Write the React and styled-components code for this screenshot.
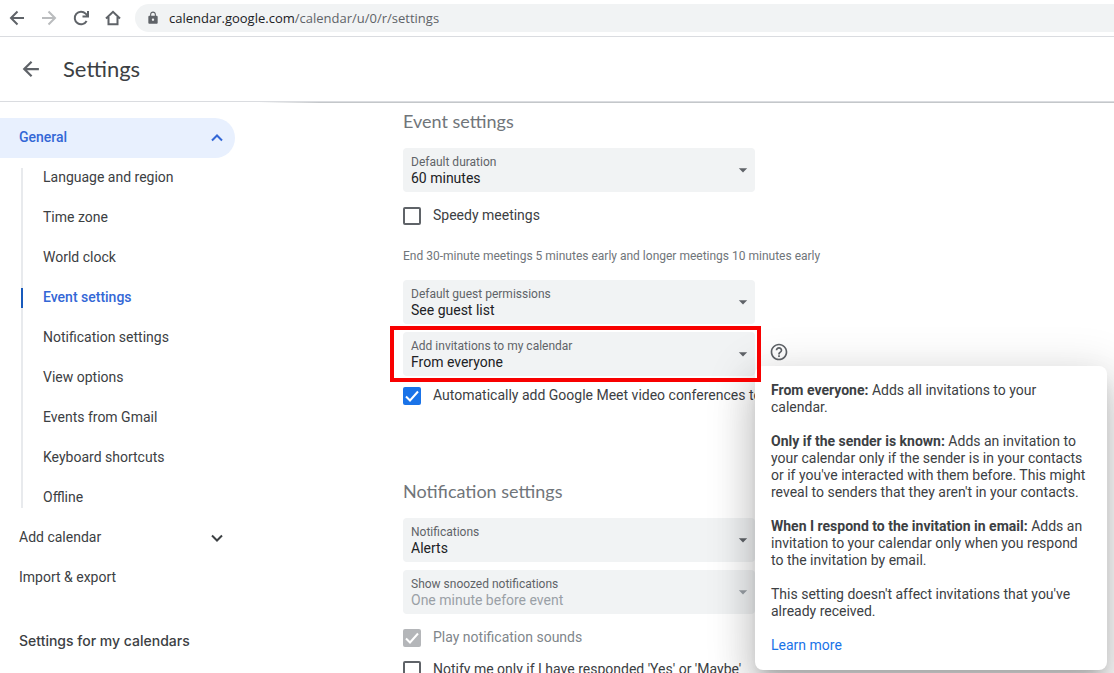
import React, { useState } from 'react';
import styled, { createGlobalStyle, css } from 'styled-components';
import { MdLock, MdArrowDropDown, MdHelpOutline } from 'react-icons/md';

const GlobalStyle = createGlobalStyle`
	* {
		box-sizing: border-box;
	}

	body {
		margin: 0;
		background: #fff;
		color: #3c4043;
		font-family: Roboto, 'Liberation Sans', sans-serif;
		font-size: 14px;
		line-height: 20px;
	}

	h1, h2, h3, p, ul {
		margin: 0;
		padding: 0;
		font-weight: 400;
	}

	button {
		border: 0;
		padding: 0;
		background: none;
		color: inherit;
		font: inherit;
		cursor: pointer;
	}
`;

const Page = styled.div`
	display: flex;
	flex-direction: column;
	height: 100vh;
	overflow: hidden;
`;

const BrowserBar = styled.div`
	display: flex;
	align-items: center;
	gap: 12px;
	flex: none;
	height: 37px;
	padding-left: 7px;
	border-bottom: 1px solid #dadce0;
`;

const IconButton = styled.button`
	display: flex;
	align-items: center;
	justify-content: center;
	flex: none;
	width: ${(props) => props.$size || 20}px;
	height: ${(props) => props.$size || 20}px;
	color: #5f6368;

	&:disabled {
		color: #babcbe;
	}
`;

const AddressBar = styled.div`
	display: flex;
	align-items: center;
	gap: 9px;
	flex: 1;
	height: 28px;
	padding-left: 11px;
	border-radius: 14px 0 0 14px;
	background: #f1f3f4;
	color: #5f6368;
	font: 13px/20px 'Open Sans', 'Noto Sans', sans-serif;
`;

const Host = styled.span`
	color: #202124;
`;

const Header = styled.header`
	display: flex;
	align-items: center;
	gap: 20px;
	flex: none;
	height: 65px;
	padding-left: 19px;
	border-bottom: 1px solid #dadce0;
`;

const Title = styled.h1`
	font: 22px/28px Lato, sans-serif;
`;

const Body = styled.div`
	display: flex;
	flex: 1;
	min-height: 0;
`;

const Sidebar = styled.nav`
	flex: none;
	width: 235px;
	padding-top: 16px;
`;

const NavRow = styled.button`
	display: flex;
	align-items: center;
	justify-content: space-between;
	width: 100%;
	height: 40px;
	padding: 0 10px 2px 19px;
	border-radius: 0 20px 20px 0;
	text-align: left;

	${(props) =>
		props.$active &&
		css`
			background: #e8f0fe;
			color: #3367d6;
			font-weight: 500;
		`}
`;

const SubList = styled.ul`
	display: flex;
	flex-direction: column;
	gap: 20px;
	margin: 10px 0 10px 21px;
	border-left: 2px solid #e8eaed;
	list-style: none;
`;

const SubLink = styled.a`
	display: block;
	height: 20px;
	margin-left: -2px;
	padding-left: 20px;
	border-left: 2px solid ${(props) => (props.$active ? '#185abc' : 'transparent')};
	color: ${(props) => (props.$active ? '#3367d6' : 'inherit')};
	font-weight: ${(props) => (props.$active ? 500 : 400)};
	line-height: 18px;
	text-decoration: none;
`;

const SidebarTitle = styled.h3`
	padding: 33px 0 0 19px;
	font: 500 14px/20px Inter, sans-serif;
`;

const Main = styled.main`
	flex: 1;
	min-width: 0;
	margin-left: 24px;
	padding: 7px 0 0 144px;
	overflow: hidden;
	background: linear-gradient(to right, transparent, #c4c7ca 60px) top / 100%
		1px no-repeat;
`;

const Section = styled.section`
	display: flex;
	flex-direction: column;
	align-items: flex-start;
	padding-bottom: 71px;
`;

const SectionTitle = styled.h2`
	margin-bottom: 15px;
	color: #70757a;
	font: 18px/24px Lato, sans-serif;
`;

const FieldRow = styled.div`
	display: flex;
	gap: 14px;
	position: relative;
	margin-bottom: 8px;
`;

const FieldBox = styled.div`
	display: flex;
	align-items: center;
	width: 352px;
	height: 44px;
	padding: 0 2px 0 8px;
	border-radius: 4px;
	background: #f1f3f4;
	color: ${(props) => (props.$disabled ? '#9aa0a6' : '#5f6368')};
`;

const FieldText = styled.div`
	display: flex;
	flex-direction: column;
	flex: 1;
`;

const FieldLabel = styled.label`
	color: #5f6368;
	font-size: 12px;
	line-height: 16px;
`;

const Select = styled.select`
	appearance: none;
	height: 16px;
	border: 0;
	padding: 0;
	background: transparent;
	color: #202124;
	font: inherit;
	line-height: 16px;

	&:disabled {
		color: #9aa0a6;
		opacity: 1;
	}
`;

const Highlight = styled.div`
	position: absolute;
	z-index: 2;
	top: -6px;
	left: -13px;
	width: 371px;
	height: 56px;
	border: 4px solid #f80000;
	pointer-events: none;
`;

const HelpButton = styled(IconButton)`
	margin-top: 10px;
`;

const CheckRow = styled.label`
	display: flex;
	align-items: flex-end;
	gap: 12px;
	height: 20px;
	margin: ${(props) => (props.$tight ? '1px 0 3px' : '5px 0 7px')};
	color: ${(props) => (props.$disabled ? '#80868b' : 'inherit')};
	white-space: nowrap;
`;

const CheckBox = styled.input`
	appearance: none;
	flex: none;
	width: 18px;
	height: 18px;
	margin: 0;
	border: 2px solid #5f6368;
	border-radius: 2px;

	&:checked {
		border: 0;
		background: #1a73e8
			url("data:image/svg+xml,%3Csvg xmlns='http://www.w3.org/2000/svg' viewBox='0 0 18 18'%3E%3Cpath d='M3 9.5l4 4 8-9' fill='none' stroke='%23fff' stroke-width='2'/%3E%3C/svg%3E");
	}

	&:checked:disabled {
		background-color: #b4b6b9;
	}
`;

const Hint = styled.p`
	margin: 16px 0;
	color: #70757a;
	font-size: 12px;
	line-height: 16px;
`;

const Popover = styled.div`
	position: absolute;
	z-index: 1;
	top: 34px;
	left: 352px;
	width: 352px;
	padding: 16px;
	border-radius: 8px;
	background: #fff;
	box-shadow:
		0 24px 38px 3px rgba(0, 0, 0, 0.14),
		0 9px 46px 8px rgba(0, 0, 0, 0.12),
		0 11px 15px -7px rgba(0, 0, 0, 0.2);
	line-height: 17px;

	p + p {
		margin-top: 17px;
	}
`;

const TextLink = styled.a`
	color: #1a73e8;
	text-decoration: none;
`;

const iconPaths = {
	back: 'M15 8H2M8.5 1.5L2 8l6.5 6.5',
	forward: 'M1 8h13M7.5 1.5L14 8l-6.5 6.5',
	reload: 'M13.6 11A6.3 6.3 0 1 1 12.6 3.6L14.5 5.5M15 1v5.5H9.5',
	home: 'M1 8.5L8 1.8l7 6.7M3.5 7v7.2h9V7',
	up: 'M3 11.5l5-5 5 5',
	down: 'M3 6.5l5 5 5-5',
};

const StrokeIcon = ({ name, size = 16 }) => (
	<svg
		width={size}
		height={size}
		viewBox="0 0 16 16"
		fill="none"
		stroke="currentColor"
		strokeWidth="2"
		aria-hidden="true"
	>
		<path d={iconPaths[name]} />
	</svg>
);

const subItems = [
	'Language and region',
	'Time zone',
	'World clock',
	'Event settings',
	'Notification settings',
	'View options',
	'Events from Gmail',
	'Keyboard shortcuts',
	'Offline',
];

const SelectField = ({ id, label, options, disabled }) => (
	<FieldBox $disabled={disabled}>
		<FieldText>
			<FieldLabel htmlFor={id}>{label}</FieldLabel>
			<Select id={id} disabled={disabled}>
				{options.map((option) => (
					<option key={option}>{option}</option>
				))}
			</Select>
		</FieldText>
		<MdArrowDropDown size={20} />
	</FieldBox>
);

const Check = ({ label, defaultChecked, disabled, tight }) => (
	<CheckRow $disabled={disabled} $tight={tight}>
		<CheckBox
			type="checkbox"
			defaultChecked={defaultChecked}
			disabled={disabled}
		/>
		{label}
	</CheckRow>
);

const InvitationHelp = () => (
	<Popover role="tooltip">
		<p>
			<b>From everyone:</b> Adds all invitations to your calendar.
		</p>
		<p>
			<b>Only if the sender is known:</b> Adds an invitation to your calendar
			only if the sender is in your contacts or if you've interacted with them
			before. This might reveal to senders that they aren't in your contacts.
		</p>
		<p>
			<b>When I respond to the invitation in email:</b> Adds an invitation to
			your calendar only when you respond to the invitation by email.
		</p>
		<p>
			This setting doesn't affect invitations that you've already received.
		</p>
		<p>
			<TextLink href="#learn-more">Learn more</TextLink>
		</p>
	</Popover>
);

const App = () => {
	const [current, setCurrent] = useState('Event settings');
	const [helpOpen, setHelpOpen] = useState(true);

	return (
		<Page>
			<GlobalStyle />
			<BrowserBar>
				<IconButton aria-label="Back">
					<StrokeIcon name="back" />
				</IconButton>
				<IconButton aria-label="Forward" disabled>
					<StrokeIcon name="forward" />
				</IconButton>
				<IconButton aria-label="Reload">
					<StrokeIcon name="reload" />
				</IconButton>
				<IconButton aria-label="Home">
					<StrokeIcon name="home" />
				</IconButton>
				<AddressBar>
					<MdLock size={14} />
					<span>
						<Host>calendar.google.com</Host>/calendar/u/0/r/settings
					</span>
				</AddressBar>
			</BrowserBar>
			<Header>
				<IconButton aria-label="Go back" $size={24}>
					<StrokeIcon name="back" size={18} />
				</IconButton>
				<Title>Settings</Title>
			</Header>
			<Body>
				<Sidebar>
					<NavRow $active>
						General
						<StrokeIcon name="up" />
					</NavRow>
					<SubList>
						{subItems.map((item) => (
							<li key={item}>
								<SubLink
									href="#"
									$active={item === current}
									onClick={() => setCurrent(item)}
								>
									{item}
								</SubLink>
							</li>
						))}
					</SubList>
					<NavRow>
						Add calendar
						<StrokeIcon name="down" />
					</NavRow>
					<NavRow>Import &amp; export</NavRow>
					<SidebarTitle>Settings for my calendars</SidebarTitle>
				</Sidebar>
				<Main>
					<Section>
						<SectionTitle>Event settings</SectionTitle>
						<FieldRow>
							<SelectField
								id="duration"
								label="Default duration"
								options={['60 minutes', '30 minutes']}
							/>
						</FieldRow>
						<Check label="Speedy meetings" />
						<Hint>
							End 30-minute meetings 5 minutes early and longer meetings 10
							minutes early
						</Hint>
						<FieldRow>
							<SelectField
								id="permissions"
								label="Default guest permissions"
								options={['See guest list', 'Modify event']}
							/>
						</FieldRow>
						<FieldRow>
							<SelectField
								id="invitations"
								label="Add invitations to my calendar"
								options={['From everyone', 'Only if the sender is known']}
							/>
							<Highlight />
							<HelpButton
								aria-label="Help"
								onClick={() => setHelpOpen(!helpOpen)}
							>
								<MdHelpOutline size={20} />
							</HelpButton>
							{helpOpen && <InvitationHelp />}
						</FieldRow>
						<Check
							label="Automatically add Google Meet video conferences to"
							defaultChecked
							tight
						/>
					</Section>
					<Section>
						<SectionTitle>Notification settings</SectionTitle>
						<FieldRow>
							<SelectField
								id="notifications"
								label="Notifications"
								options={['Alerts', 'Off']}
							/>
						</FieldRow>
						<FieldRow>
							<SelectField
								id="snoozed"
								label="Show snoozed notifications"
								options={['One minute before event']}
								disabled
							/>
						</FieldRow>
						<Check label="Play notification sounds" defaultChecked disabled />
						<Check label="Notify me only if I have responded 'Yes' or 'Maybe'" />
					</Section>
				</Main>
			</Body>
		</Page>
	);
};

export default App;
